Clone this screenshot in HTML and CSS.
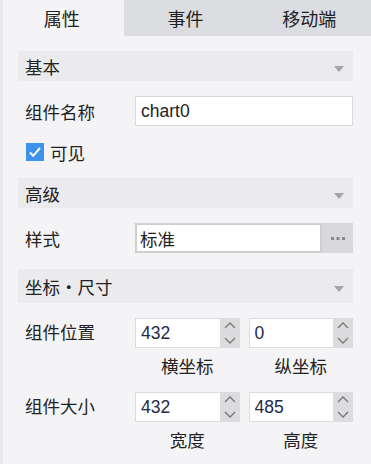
FILE: index.html
```html
<!DOCTYPE html>
<html lang="zh">
<head>
    <meta charset="UTF-8">
    <title>属性</title>
    <link rel="stylesheet" href="styles.css">
</head>
<body>
    <div class="panel">
        <div class="tabs">
            <div class="tab active">属性</div>
            <div class="tab">事件</div>
            <div class="tab">移动端</div>
        </div>

        <div class="content">
            <div class="group">基本<span class="caret"></span></div>

            <div class="row">
                <div class="label">组件名称</div>
                <div class="field"><input class="text" value="chart0"></div>
            </div>

            <div class="check">
                <span class="box">
                    <svg width="18" height="18" viewBox="0 0 18 18"><path d="M4 9.5l3.2 3.3L14 5" fill="none" stroke="#fff" stroke-width="2"/></svg>
                </span>
                可见
            </div>

            <div class="group">高级<span class="caret"></span></div>

            <div class="row">
                <div class="label">样式</div>
                <div class="field picker">
                    <input class="text strong" value="标准">
                    <span class="more">
                        <svg width="16" height="4" viewBox="0 0 16 4"><rect x="1" y="1" width="3" height="3" fill="#8a8a8c"/><rect x="6.5" y="1" width="3" height="3" fill="#8a8a8c"/><rect x="12" y="1" width="3" height="3" fill="#8a8a8c"/></svg>
                    </span>
                </div>
            </div>

            <div class="group tall">坐标・尺寸<span class="caret"></span></div>

            <div class="row spin-row">
                <div class="label">组件位置</div>
                <div class="pair">
                    <div class="cell">
                        <div class="spinner">
                            <input class="num" value="432">
                            <span class="arrows">
                                <svg width="20" height="30" viewBox="0 0 20 30"><path d="M5 10l5-5 5 5M5 20l5 5 5-5" fill="none" stroke="#777" stroke-width="1.3"/></svg>
                            </span>
                        </div>
                        <div class="caption">横坐标</div>
                    </div>
                    <div class="cell">
                        <div class="spinner">
                            <input class="num" value="0">
                            <span class="arrows">
                                <svg width="20" height="30" viewBox="0 0 20 30"><path d="M5 10l5-5 5 5M5 20l5 5 5-5" fill="none" stroke="#777" stroke-width="1.3"/></svg>
                            </span>
                        </div>
                        <div class="caption">纵坐标</div>
                    </div>
                </div>
            </div>

            <div class="row spin-row">
                <div class="label">组件大小</div>
                <div class="pair">
                    <div class="cell">
                        <div class="spinner">
                            <input class="num" value="432">
                            <span class="arrows">
                                <svg width="20" height="30" viewBox="0 0 20 30"><path d="M5 10l5-5 5 5M5 20l5 5 5-5" fill="none" stroke="#777" stroke-width="1.3"/></svg>
                            </span>
                        </div>
                        <div class="caption">宽度</div>
                    </div>
                    <div class="cell">
                        <div class="spinner">
                            <input class="num" value="485">
                            <span class="arrows">
                                <svg width="20" height="30" viewBox="0 0 20 30"><path d="M5 10l5-5 5 5M5 20l5 5 5-5" fill="none" stroke="#777" stroke-width="1.3"/></svg>
                            </span>
                        </div>
                        <div class="caption">高度</div>
                    </div>
                </div>
            </div>
        </div>
    </div>
</body>
</html>
```

FILE: styles.css
```css
body {
    margin: 0;
    font-family: "Liberation Sans", "Noto Sans CJK SC", sans-serif;
    font-size: 17.5px;
    color: #222;
    background: #f4f4f6;
}
.panel {
    height: 464px;
    border-left: 3px solid #e9e9eb;
    background: #f4f4f6;
    overflow: hidden;
}
.tabs {
    display: flex;
    height: 36px;
    margin-left: -3px;
}
.tab {
    flex: 1;
    display: flex;
    align-items: center;
    justify-content: center;
    background: #dcdde0;
    font-size: 18px;
}
.tab.active {
    background: #f4f4f6;
}
.content {
    padding: 15px 18px 0 15px;
}
.group {
    display: flex;
    align-items: center;
    justify-content: space-between;
    height: 30px;
    padding: 0 9px 0 7px;
    background: #ebebed;
    margin-bottom: 15px;
}
.group.tall {
    height: 34px;
}
.caret {
    width: 0;
    height: 0;
    border-left: 5px solid transparent;
    border-right: 5px solid transparent;
    border-top: 6px solid #a6a6a8;
    margin-top: 6px;
}
.row {
    display: flex;
    align-items: center;
    margin-bottom: 16px;
}
.label {
    width: 110px;
    padding-left: 7px;
    flex-shrink: 0;
}
.field {
    flex: 1;
    min-width: 0;
    display: flex;
    height: 30px;
}
input {
    font-family: inherit;
    font-size: inherit;
    color: #222;
    outline: none;
    width: 0;
}
.text {
    flex: 1;
    min-width: 0;
    height: 30px;
    box-sizing: border-box;
    border: 1px solid #d9d9d9;
    background: #fff;
    padding: 0 5px;
}
.text.strong {
    border: 2px solid #cfcfd1;
    padding: 0 3px;
}
.more {
    width: 31px;
    flex-shrink: 0;
    display: flex;
    align-items: center;
    justify-content: center;
    background: #d9d9dc;
}
.check {
    display: flex;
    align-items: center;
    gap: 6px;
    padding-left: 8px;
    height: 20px;
    margin-bottom: 16px;
}
.box {
    width: 18px;
    height: 18px;
    background: #3c93ec;
    display: flex;
}
.spin-row {
    align-items: flex-start;
    margin-top: 2px;
    margin-bottom: 14px;
}
.spin-row .label {
    line-height: 30px;
}
.pair {
    flex: 1;
    min-width: 0;
    display: flex;
    gap: 9px;
}
.cell {
    flex: 1;
    min-width: 0;
    display: flex;
    flex-direction: column;
    align-items: center;
}
.spinner {
    display: flex;
    width: 100%;
    height: 30px;
}
.num {
    flex: 1;
    min-width: 0;
    box-sizing: border-box;
    height: 30px;
    border: 1px solid #dcdcde;
    border-right: none;
    background: #fff;
    padding: 0 5px;
    color: #1e2a48;
}
.arrows {
    width: 20px;
    flex-shrink: 0;
    background: #dcdcdf;
    display: flex;
}
.caption {
    margin-top: 8px;
    line-height: 22px;
}
```
